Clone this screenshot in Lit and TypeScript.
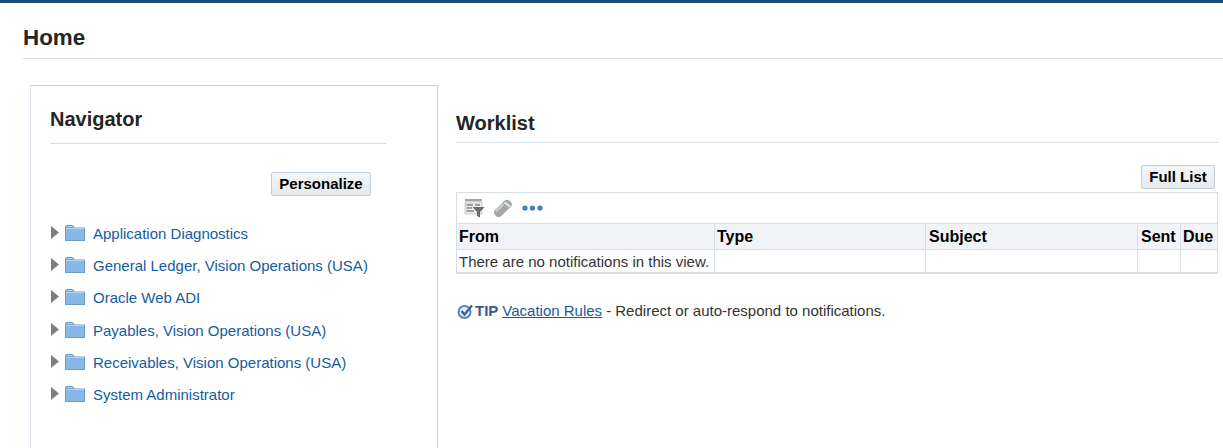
import { LitElement, html, css, svg } from "lit";
import { customElement } from "lit/decorators.js";

const items = [
  "Application Diagnostics",
  "General Ledger, Vision Operations (USA)",
  "Oracle Web ADI",
  "Payables, Vision Operations (USA)",
  "Receivables, Vision Operations (USA)",
  "System Administrator",
];

@customElement("app-root")
export class AppRoot extends LitElement {
  static styles = css`
    :host { display: block; height: 448px; overflow: hidden; background: #fff; font-family: "Liberation Sans", Arial, sans-serif; color: #252525; }
    .topbar { height: 3px; background: #1f4e72; }
    .page-head { margin-left: 23px; height: 56px; box-sizing: border-box; border-bottom: 1px solid #d6dfe6; padding-top: 20px; }
    h1 { margin: 0; font-size: 22.4px; line-height: 29px; font-weight: bold; color: #252525; }
    .main { display: flex; padding: 26px 0 0 30px; }
    .nav { width: 408px; height: 400px; box-sizing: border-box; flex: none; border: 1px solid #d6dfe6; border-top-color: #c8d0d9; border-right-color: #c8d0d9; padding: 0 51px 0 19px; }
    h2 { margin: 0; font-size: 20px; line-height: 24px; font-weight: bold; color: #252525; border-bottom: 1px solid #d6dfe6; }
    .nav h2 { padding: 21px 0 12px; }
    .personalize-row { display: flex; justify-content: flex-end; padding: 28px 15px 0 0; }
    .btn { box-sizing: border-box; height: 24px; border: 1px solid #c4ced7; border-radius: 2px; background: linear-gradient(#f4f6f7, #e6eaed); font: bold 15px/22px "Liberation Sans", Arial, sans-serif; color: #000; padding: 0; text-align: center; }
    .personalize { width: 100px; }
    .fulllist { width: 74px; }
    ul { list-style: none; margin: 22px 0 0; padding: 0; }
    li { display: flex; align-items: center; height: 32.2px; }
    li svg { display: block; flex: none; margin-bottom: 2px; }
    .tri { margin-right: 5px; }
    .folder { margin-right: 8px; }
    a { color: #145c9e; text-decoration: none; font-size: 15px; line-height: 18px; }
    .work { margin-left: 18px; width: 762px; flex: none; }
    .work h2 { padding: 26px 0 7px; line-height: 24px; }
    .fl-row { display: flex; justify-content: flex-end; padding: 22px 3px 3px 0; }
    table { width: 762px; box-sizing: border-box; border-collapse: collapse; table-layout: fixed; border: 1px solid #d6dfe6; border-bottom-width: 2px; font-size: 15px; }
    td, th { border: 1px solid #d6dfe6; padding: 0 0 0 2px; text-align: left; vertical-align: middle; white-space: nowrap; overflow: hidden; }
    th { height: 25px; background: #f1f3f7; color: #000; font-weight: bold; font-size: 16px; }
    th.pad { padding-left: 3px; }
    td { height: 22px; color: #333; }
    .tools { height: 30px; background: #fff; padding: 0; }
    .tools-in { display: flex; align-items: center; padding-left: 7px; height: 30px; }
    .tools-in svg { display: block; flex: none; }
    .tools-in .erase { margin-left: 8px; }
    .tools-in .dots { margin-left: 9px; }
    .tip { display: flex; align-items: center; margin-top: 27px; font-size: 15px; line-height: 20px; color: #333; }
    .tip svg { display: block; flex: none; margin: 0 1px 0 1px; }
    .tip b { color: #3a5a8c; margin-right: 4px; }
    .tip a { text-decoration: underline; margin-right: 4px; }
  `;

  render() {
    const tri = svg`<path d="M1 1 L9 7.5 L1 14 Z" fill="#7b7f82"/>`;
    const folder = svg`
      <path d="M0.5 3 V1.2 Q0.5 0.5 1.2 0.5 H7.5 Q8.2 0.5 8.5 1.2 L9 3 Z" fill="#a9cbe9" stroke="#6f9bc4"/>
      <rect x="0.5" y="3" width="19" height="12.5" fill="#85b8e6" stroke="#6f9bc4"/>
      <path d="M1 3.6 H19" stroke="#b8d6f0"/>`;
    return html`
      <div class="topbar"></div>
      <div class="page-head"><h1>Home</h1></div>
      <div class="main">
        <section class="nav">
          <h2>Navigator</h2>
          <div class="personalize-row"><button class="btn personalize">Personalize</button></div>
          <ul>
            ${items.map(
              (t) => html`<li>
                <svg class="tri" width="10" height="16" viewBox="0 0 10 16">${tri}</svg>
                <svg class="folder" width="20" height="16" viewBox="0 0 20 16">${folder}</svg>
                <a href="#">${t}</a>
              </li>`
            )}
          </ul>
        </section>
        <section class="work">
          <h2>Worklist</h2>
          <div class="fl-row"><button class="btn fulllist">Full List</button></div>
          <table>
            <colgroup>
              <col style="width:258px" /><col style="width:211px" /><col style="width:212px" /><col style="width:43px" /><col />
            </colgroup>
            <tr>
              <td class="tools" colspan="5">
                <div class="tools-in">
                  <svg width="21" height="20" viewBox="0 0 21 20">
                    <path d="M1 1 H18 V3.5 H1 Z" fill="#a2a4a6"/>
                    <path d="M1 5 H18 V16 H1 Z" fill="#f0f0f0" stroke="#a8aaac" stroke-width="0.6"/>
                    <path d="M2.5 7 H9 M2.5 10 H8 M2.5 13 H10 M11 7 H16" stroke="#808284" stroke-width="1.3"/>
                    <path d="M8.5 9 H20.5 L16 14 V19.5 L13 18 V14 Z" fill="#6a6c6e"/>
                  </svg>
                  <svg class="erase" width="20" height="19" viewBox="0 0 20 19">
                    <path d="M1.5 11.5 L11.5 1.7 Q13.5 0.5 15.5 1 L18 3 Q19.5 5 18.5 7 L8 17.3 Q5.5 18.8 3.5 17.5 L1.5 15.5 Q0.5 13.5 1.5 11.5 Z" fill="#a4a6a7"/>
                    <path d="M11.5 3.5 L17 7.5" stroke="#ececec" stroke-width="2"/>
                    <path d="M3 12.5 L10.5 5.2" stroke="#cfd0d1" stroke-width="2"/>
                  </svg>
                  <svg class="dots" width="21" height="6" viewBox="0 0 21 6">
                    <circle cx="3" cy="3" r="2.6" fill="#3a80bd"/><circle cx="10.5" cy="3" r="2.6" fill="#3a80bd"/><circle cx="18" cy="3" r="2.6" fill="#3a80bd"/>
                  </svg>
                </div>
              </td>
            </tr>
            <tr><th>From</th><th>Type</th><th class="pad">Subject</th><th class="pad">Sent</th><th>Due</th></tr>
            <tr><td>There are no notifications in this view.</td><td></td><td></td><td></td><td></td></tr>
          </table>
          <div class="tip">
            <svg width="17" height="17" viewBox="0 0 17 17">
              <circle cx="7.5" cy="9" r="6" fill="#e4edf8" stroke="#5b83c0" stroke-width="2"/>
              <path d="M4.5 8 L7.5 11.5 L15 2.5" fill="none" stroke="#3f5f96" stroke-width="2.4"/>
            </svg>
            <b>TIP</b><a href="#">Vacation Rules</a><span>- Redirect or auto-respond to notifications.</span>
          </div>
        </section>
      </div>
    `;
  }
}
